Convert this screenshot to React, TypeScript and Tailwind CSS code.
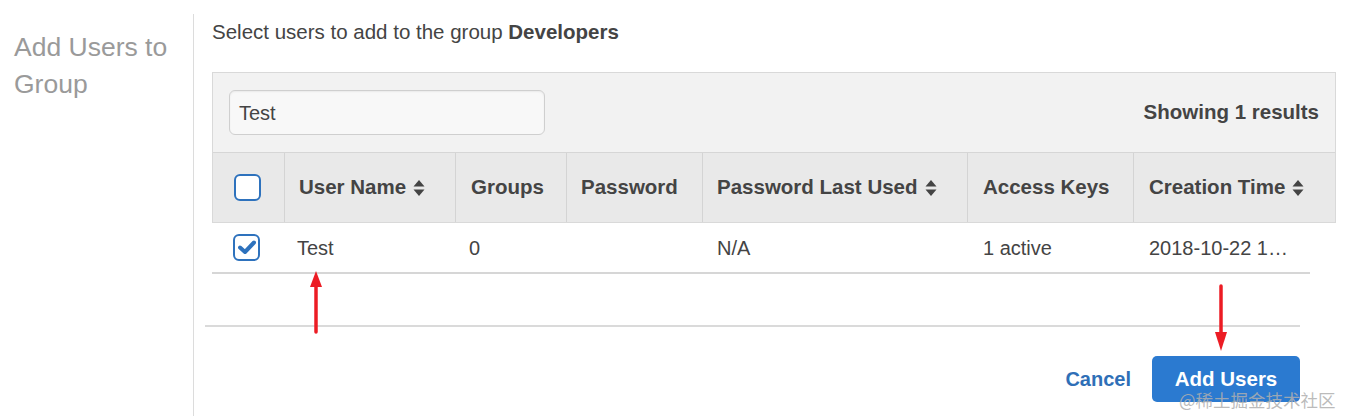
import React from "react";

function SortIcon() {
  return (
    <svg width="12" height="18" viewBox="0 0 12 18" className="ml-[7px] inline-block">
      <path d="M6 1 L11.5 7.5 L0.5 7.5 Z" fill="#444" />
      <path d="M6 17 L11.5 10.5 L0.5 10.5 Z" fill="#444" />
    </svg>
  );
}

const cols = [72, 171, 111, 136, 265, 166, 202];

export default function App() {
  const font = { fontFamily: '"Liberation Sans", Arial, sans-serif' };
  return (
    <div className="relative w-[1346px] h-[416px] bg-white flex overflow-hidden" style={font}>
      {/* Left title */}
      <div className="w-[193px] shrink-0 pl-[14px] pt-[29px]">
        <div className="text-[26.5px] leading-[37px] text-[#9a9a9a]">
          Add Users to
          <br />
          Group
        </div>
      </div>
      <div className="mt-[14px] border-l border-[#dcdcdc]" />
      {/* Right content */}
      <div className="flex-1 pl-[18px] pt-[20px] pr-[10px]">
        <div className="text-[20.5px] leading-[24px] text-[#444]">
          Select users to add to the group <span className="font-bold">Developers</span>
        </div>
        <div className="mt-[28px] w-[1124px] border border-[#d9d9d9] border-b-0">
          {/* filter bar */}
          <div className="h-[80px] bg-[#f2f2f2] flex items-center justify-between pl-[16px] pr-[16px] border-b border-[#d6d6d6]">
            <div className="w-[316px] h-[45px] rounded-[6px] border border-[#cfcfcf] bg-[#f8f8f8] flex items-center pl-[9px] text-[20px] text-[#444] shadow-[inset_0_1px_2px_rgba(0,0,0,0.06)]">
              Test
            </div>
            <div className="text-[20.5px] font-bold text-[#444]">Showing 1 results</div>
          </div>
          {/* header */}
          <div className="flex h-[70px] bg-[#e9e9e9] border-b border-[#d9d9d9] text-[20.5px] font-bold text-[#444]">
            <div className="flex items-center pl-[21px] border-r border-[#d4d4d4]" style={{ width: cols[0] }}>
              <div className="w-[27px] h-[27px] rounded-[6px] border-2 border-[#2e72bd] bg-white" />
            </div>
            <div className="flex items-center pl-[14px] border-r border-[#d4d4d4]" style={{ width: cols[1] }}>
              User Name <SortIcon />
            </div>
            <div className="flex items-center pl-[15px] border-r border-[#d4d4d4]" style={{ width: cols[2] }}>
              Groups
            </div>
            <div className="flex items-center pl-[14px] border-r border-[#d4d4d4]" style={{ width: cols[3] }}>
              Password
            </div>
            <div className="flex items-center pl-[14px] border-r border-[#d4d4d4]" style={{ width: cols[4] }}>
              Password Last Used <SortIcon />
            </div>
            <div className="flex items-center pl-[15px] border-r border-[#d4d4d4]" style={{ width: cols[5] }}>
              Access Keys
            </div>
            <div className="flex items-center pl-[15px]" style={{ width: cols[6] - 2 }}>
              Creation Time <SortIcon />
            </div>
          </div>
        </div>
        {/* data row */}
        <div className="flex h-[51px] w-[1098px] border-b-2 border-[#d6d6d6] text-[20px] text-[#444]">
          <div className="flex items-center pl-[21px]" style={{ width: cols[0] }}>
            <div className="w-[27px] h-[27px] rounded-[6px] border-2 border-[#2e72bd] bg-white flex items-center justify-center">
              <svg width="18" height="15" viewBox="0 0 18 15">
                <path d="M2 7.5 L7 12 L16 2.5" fill="none" stroke="#2e72bd" strokeWidth="4" strokeLinecap="round" strokeLinejoin="round" />
              </svg>
            </div>
          </div>
          <div className="flex items-center pl-[13px]" style={{ width: cols[1] }}>Test</div>
          <div className="flex items-center pl-[14px]" style={{ width: cols[2] }}>0</div>
          <div className="flex items-center pl-[14px]" style={{ width: cols[3] }}></div>
          <div className="flex items-center pl-[15px]" style={{ width: cols[4] }}>N/A</div>
          <div className="flex items-center pl-[16px]" style={{ width: cols[5] }}>1 active</div>
          <div className="flex items-center pl-[16px]">2018-10-22 1…</div>
        </div>
        <div className="h-[51px]" />
        <div className="ml-[-7px] w-[1095px] border-b-2 border-[#dadada]" />
        <div className="flex justify-end items-center w-[1088px] mt-[29px] gap-[21px]">
          <span className="text-[20px] font-bold text-[#2f6fb7]">Cancel</span>
          <div className="w-[148px] h-[46px] rounded-[5px] bg-[#2b7ad0] flex items-center justify-center text-[20.5px] font-bold text-white">
            Add Users
          </div>
        </div>
      </div>

      {/* Red arrows (annotations) */}
      <svg className="absolute left-[308px] top-[270px]" width="16" height="66" viewBox="0 0 16 66">
        <path d="M8 1 L14 17 L2 17 Z" fill="#ec1c24" />
        <line x1="8" y1="14" x2="8" y2="62" stroke="#ec1c24" strokeWidth="3.5" strokeLinecap="round" />
      </svg>
      <svg className="absolute left-[1213px] top-[283px]" width="16" height="70" viewBox="0 0 16 70">
        <line x1="8" y1="3" x2="8" y2="52" stroke="#ec1c24" strokeWidth="3.5" strokeLinecap="round" />
        <path d="M8 68 L14 49 L2 49 Z" fill="#ec1c24" />
      </svg>

      {/* watermark */}
      <div
        className="absolute left-[1179px] top-[388px] text-[17.5px] leading-[24px] whitespace-nowrap text-[rgba(175,175,175,0.85)]"
        style={{ fontFamily: '"Noto Sans CJK SC", "Liberation Sans", sans-serif' }}
      >
        @稀土掘金技术社区
      </div>
    </div>
  );
}
